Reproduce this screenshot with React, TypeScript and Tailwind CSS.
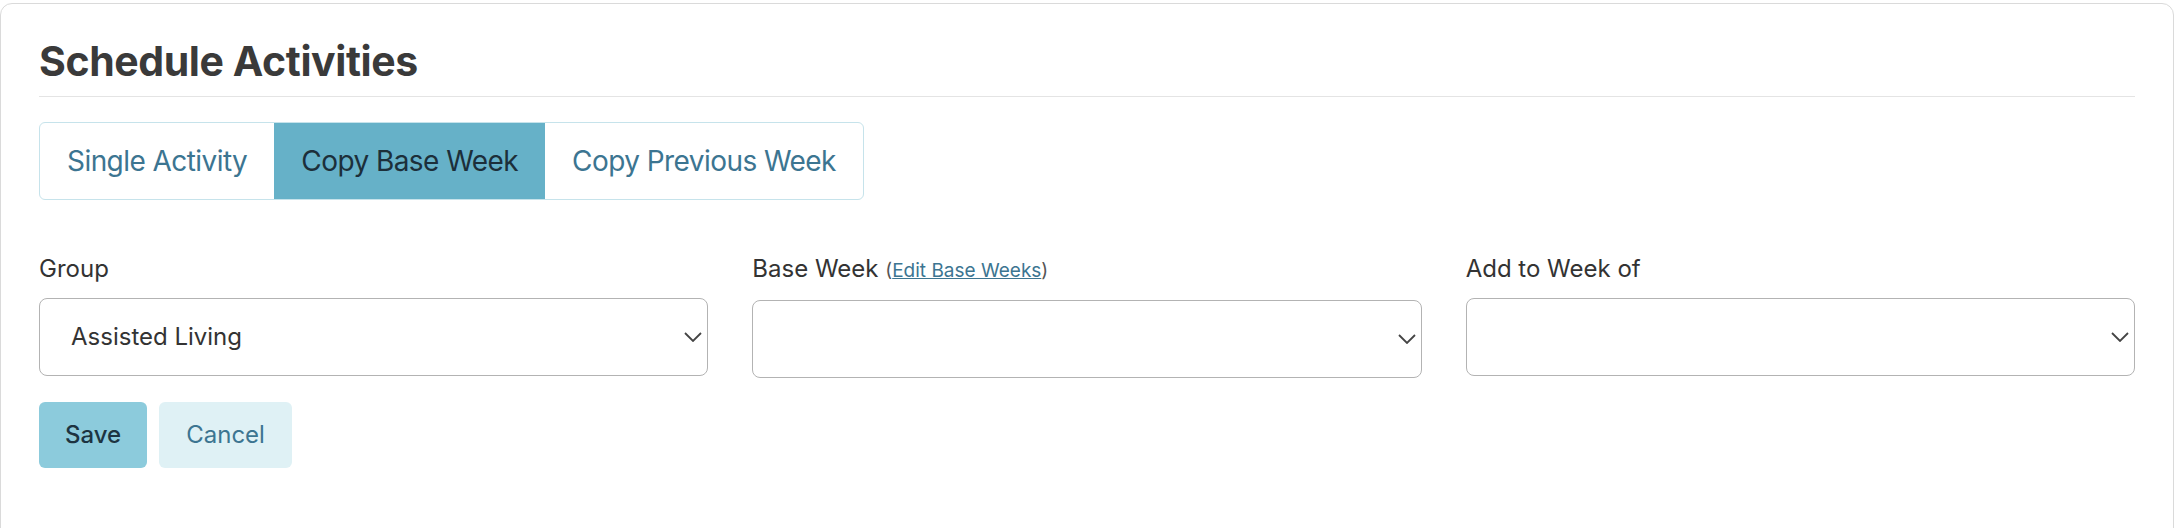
import React from "react";

const tabs = ["Single Activity", "Copy Base Week", "Copy Previous Week"];

function Chevron() {
  return (
    <svg
      width="18"
      height="10"
      viewBox="0 0 18 10"
      className="pointer-events-none absolute right-[6px] top-1/2 -translate-y-1/2"
    >
      <polyline
        points="1,1 9,9 17,1"
        fill="none"
        stroke="#444"
        strokeWidth="1.8"
      />
    </svg>
  );
}

function SelectField({
  label,
  value,
}: {
  label: React.ReactNode;
  value?: string;
}) {
  return (
    <div className="flex flex-col gap-[13px]">
      <label className="text-[24px] leading-[32px] text-[#333]">{label}</label>
      <div className="relative">
        <select
          className="h-[78px] w-full appearance-none rounded-[8px] border border-[#b3b3b3] bg-white pl-[31px] text-[24px] text-[#333] outline-none"
          defaultValue={value ?? ""}
        >
          <option value={value ?? ""}>{value ?? ""}</option>
        </select>
        <Chevron />
      </div>
    </div>
  );
}

export default function App() {
  const active = 1;
  return (
    <div className="bg-white pr-[2px] pt-[3px] font-['Inter',sans-serif]">
      <div className="min-h-[560px] rounded-[12px] border border-[#dadada] bg-white px-[38px] pt-[33px]">
        <h1 className="border-b border-[#e4e4e4] pb-[11px] text-[41px] font-bold leading-[48px] tracking-[-0.01em] text-[#3a3a3a]">
          Schedule Activities
        </h1>

        <div className="mt-[25px] inline-flex h-[78px] overflow-hidden rounded-[6px] border border-[#c6e3eb]">
          {tabs.map((t, i) => (
            <button
              key={t}
              type="button"
              className={`-my-px flex items-center px-[27px] text-[28px] tracking-[-0.02em] ${
                i === active
                  ? "bg-[#66b1c8] text-[#1c2f3a]"
                  : "text-[#3c7591]"
              }`}
            >
              {t}
            </button>
          ))}
        </div>

        <div className="mt-[53px] grid grid-cols-3 gap-x-[44px]">
          <SelectField label="Group" value="Assisted Living" />
          <SelectField
            label={
              <>
                Base Week{" "}
                <span className="text-[19px] text-[#555]">
                  (
                  <a href="#" className="text-[#3c7591] underline">
                    Edit Base Weeks
                  </a>
                  )
                </span>
              </>
            }
          />
          <SelectField label="Add to Week of" />
        </div>

        <div className="mt-[24px] flex gap-[12px]">
          <button
            type="button"
            className="h-[66px] rounded-[6px] bg-[#8ccbdc] px-[26px] text-[24px] font-medium text-[#1d3441]"
          >
            Save
          </button>
          <button
            type="button"
            className="h-[66px] rounded-[6px] bg-[#dff1f5] px-[27px] text-[24px] text-[#3c7591]"
          >
            Cancel
          </button>
        </div>
      </div>
    </div>
  );
}
